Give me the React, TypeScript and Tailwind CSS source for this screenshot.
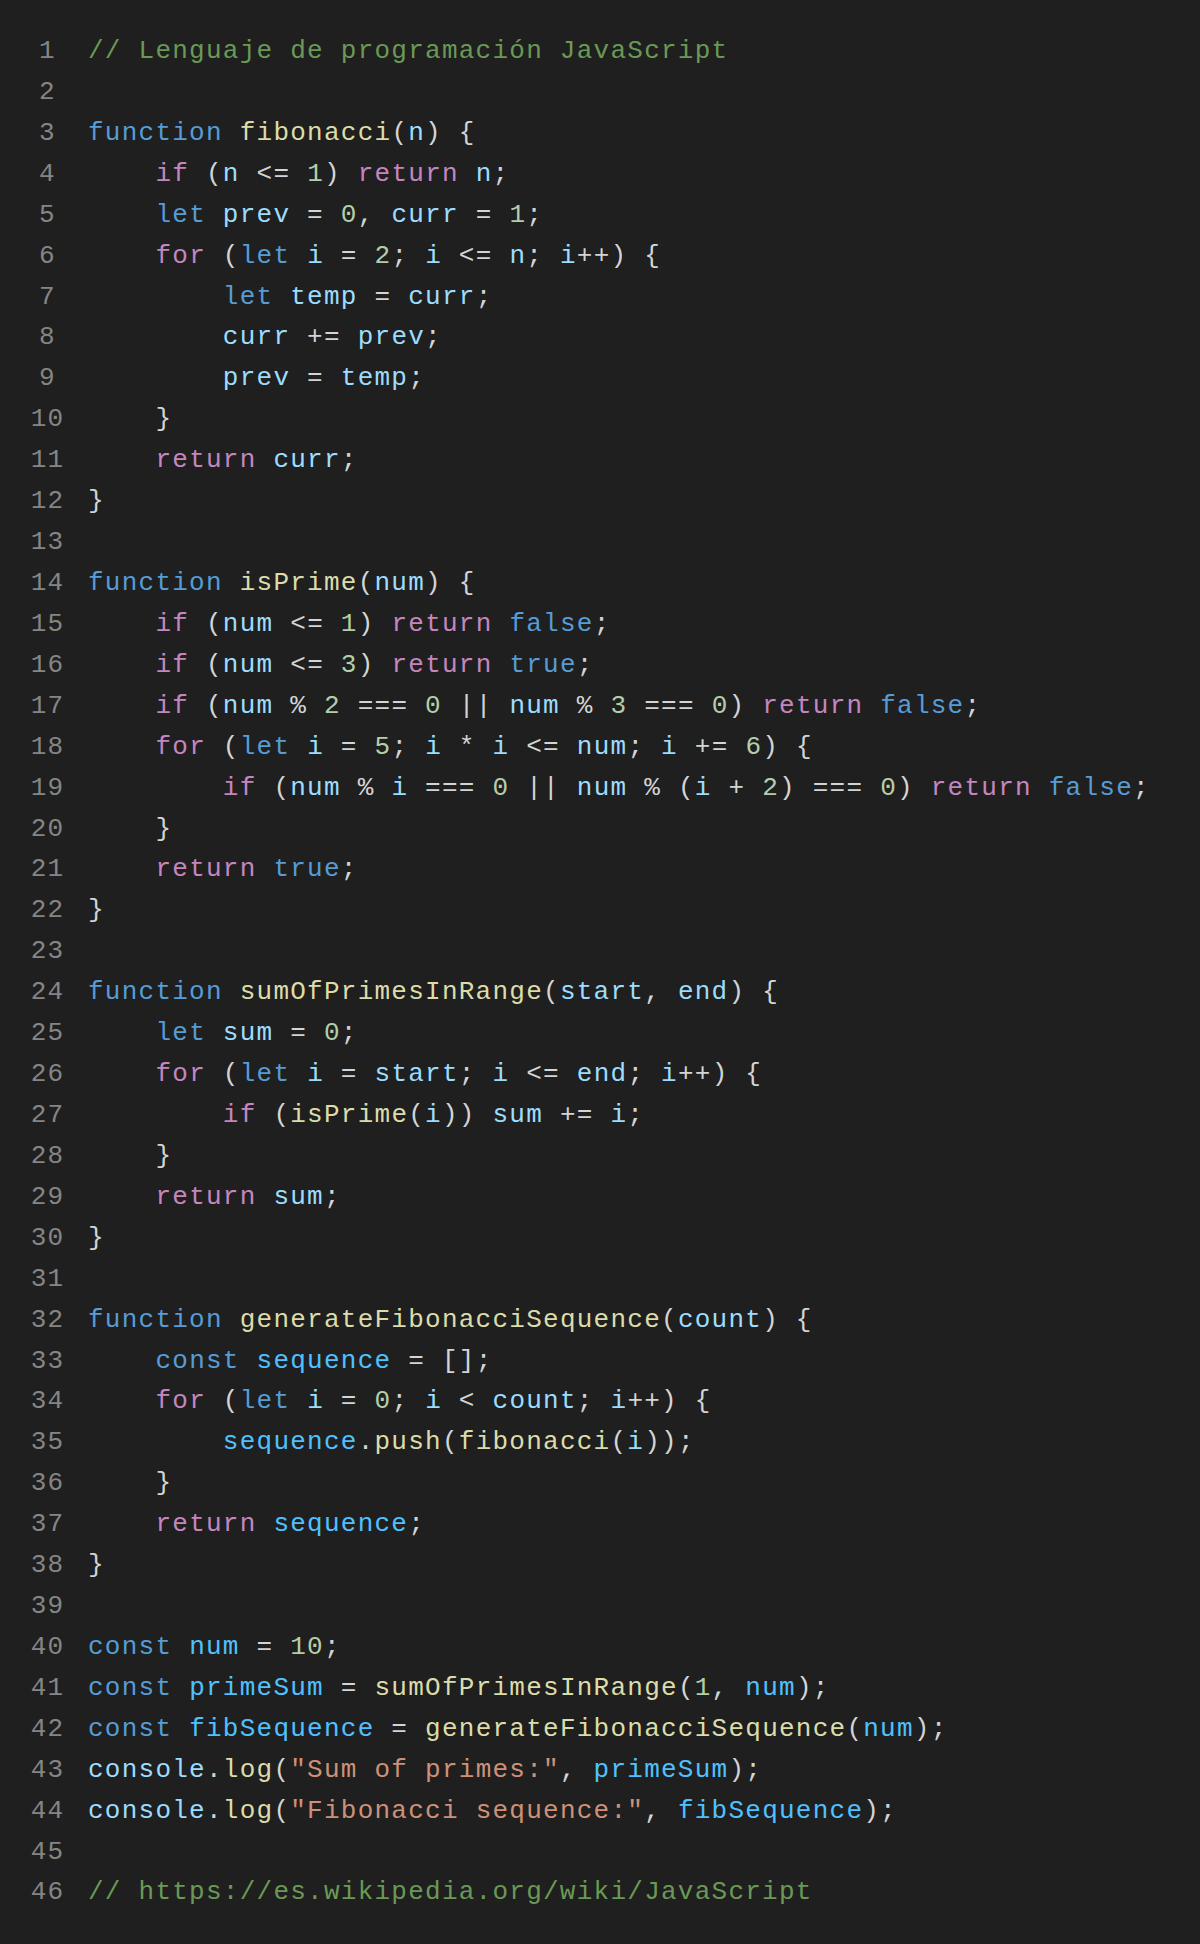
const colors: Record<string, string> = {
  k: "text-[#569cd6]",
  p: "text-[#c586c0]",
  f: "text-[#dcdcaa]",
  v: "text-[#9cdcfe]",
  C: "text-[#4fc1ff]",
  n: "text-[#b5cea8]",
  s: "text-[#ce9178]",
  c: "text-[#6a9955]",
  d: "text-[#d4d4d4]",
};

// pieces separated by "~", optional "x:" prefix gives the token colour
const source = [
  "c:// Lenguaje de programación JavaScript",
  "",
  "k:function~ ~f:fibonacci~(~v:n~) {",
  "    ~p:if~ (~v:n~ <= ~n:1~) ~p:return~ ~v:n~;",
  "    ~k:let~ ~v:prev~ = ~n:0~, ~v:curr~ = ~n:1~;",
  "    ~p:for~ (~k:let~ ~v:i~ = ~n:2~; ~v:i~ <= ~v:n~; ~v:i~++) {",
  "        ~k:let~ ~v:temp~ = ~v:curr~;",
  "        ~v:curr~ += ~v:prev~;",
  "        ~v:prev~ = ~v:temp~;",
  "    }",
  "    ~p:return~ ~v:curr~;",
  "}",
  "",
  "k:function~ ~f:isPrime~(~v:num~) {",
  "    ~p:if~ (~v:num~ <= ~n:1~) ~p:return~ ~k:false~;",
  "    ~p:if~ (~v:num~ <= ~n:3~) ~p:return~ ~k:true~;",
  "    ~p:if~ (~v:num~ % ~n:2~ === ~n:0~ || ~v:num~ % ~n:3~ === ~n:0~) ~p:return~ ~k:false~;",
  "    ~p:for~ (~k:let~ ~v:i~ = ~n:5~; ~v:i~ * ~v:i~ <= ~v:num~; ~v:i~ += ~n:6~) {",
  "        ~p:if~ (~v:num~ % ~v:i~ === ~n:0~ || ~v:num~ % (~v:i~ + ~n:2~) === ~n:0~) ~p:return~ ~k:false~;",
  "    }",
  "    ~p:return~ ~k:true~;",
  "}",
  "",
  "k:function~ ~f:sumOfPrimesInRange~(~v:start~, ~v:end~) {",
  "    ~k:let~ ~v:sum~ = ~n:0~;",
  "    ~p:for~ (~k:let~ ~v:i~ = ~v:start~; ~v:i~ <= ~v:end~; ~v:i~++) {",
  "        ~p:if~ (~f:isPrime~(~v:i~)) ~v:sum~ += ~v:i~;",
  "    }",
  "    ~p:return~ ~v:sum~;",
  "}",
  "",
  "k:function~ ~f:generateFibonacciSequence~(~v:count~) {",
  "    ~k:const~ ~C:sequence~ = [];",
  "    ~p:for~ (~k:let~ ~v:i~ = ~n:0~; ~v:i~ < ~v:count~; ~v:i~++) {",
  "        ~C:sequence~.~f:push~(~f:fibonacci~(~v:i~));",
  "    }",
  "    ~p:return~ ~C:sequence~;",
  "}",
  "",
  "k:const~ ~C:num~ = ~n:10~;",
  "k:const~ ~C:primeSum~ = ~f:sumOfPrimesInRange~(~n:1~, ~C:num~);",
  "k:const~ ~C:fibSequence~ = ~f:generateFibonacciSequence~(~C:num~);",
  "v:console~.~f:log~(~s:\"Sum of primes:\"~, ~C:primeSum~);",
  "v:console~.~f:log~(~s:\"Fibonacci sequence:\"~, ~C:fibSequence~);",
  "",
  "c:// https://es.wikipedia.org/wiki/JavaScript",
];

function parse(line: string) {
  if (!line) return [];
  return line.split("~").map((piece) => {
    const m = /^([kpfvCnsc]):/.exec(piece);
    return m ? { t: m[1], text: piece.slice(2) } : { t: "d", text: piece };
  });
}

export default function App() {
  return (
    <div className="min-h-[1944px] w-full bg-[#1f1f1f] pt-[31px] font-['Liberation_Mono',monospace] text-[26px] leading-[40.92px] tracking-[1.25px]">
      {source.map((line, i) => (
        <div key={i} className="flex">
          <span className="ml-[30px] w-[35px] shrink-0 text-center text-[#858585]">{i + 1}</span>
          <code className="ml-[23px] whitespace-pre text-[#d4d4d4]">
            {parse(line).map((tok, j) => (
              <span key={j} className={colors[tok.t]}>
                {tok.text}
              </span>
            ))}
          </code>
        </div>
      ))}
    </div>
  );
}
